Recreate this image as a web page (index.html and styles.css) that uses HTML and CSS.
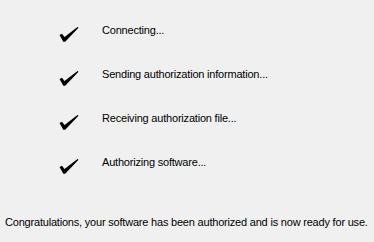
FILE: index.html
```html
<!DOCTYPE html>
<html>
<head>
<meta charset="utf-8">
<link rel="stylesheet" href="styles.css">
</head>
<body>
<div class="panel">
  <ul class="steps">
    <li class="step"><svg class="check" viewBox="0 0 20 15" width="20" height="15"><path d="M0.5 8 L3 6.8 L5.5 10 L18.5 0 L19.5 0.8 L6.2 14.8 L4.3 14.8 Z"/></svg><span class="label">Connecting...</span></li>
    <li class="step"><svg class="check" viewBox="0 0 20 15" width="20" height="15"><path d="M0.5 8 L3 6.8 L5.5 10 L18.5 0 L19.5 0.8 L6.2 14.8 L4.3 14.8 Z"/></svg><span class="label">Sending authorization information...</span></li>
    <li class="step"><svg class="check" viewBox="0 0 20 15" width="20" height="15"><path d="M0.5 8 L3 6.8 L5.5 10 L18.5 0 L19.5 0.8 L6.2 14.8 L4.3 14.8 Z"/></svg><span class="label">Receiving authorization file...</span></li>
    <li class="step"><svg class="check" viewBox="0 0 20 15" width="20" height="15"><path d="M0.5 8 L3 6.8 L5.5 10 L18.5 0 L19.5 0.8 L6.2 14.8 L4.3 14.8 Z"/></svg><span class="label">Authorizing software...</span></li>
  </ul>
  <p class="message">Congratulations, your software has been authorized and is now ready for use.</p>
</div>
</body>
</html>
```
FILE: styles.css
```css
html, body {
  margin: 0;
  padding: 0;
  background: #f0f0f0;
}
.panel {
  width: 374px;
  height: 242px;
  font-family: "Liberation Sans", Arial, sans-serif;
  font-size: 11px;
  line-height: 13px;
  color: #000;
  padding-top: 24px;
  box-sizing: border-box;
}
.steps {
  list-style: none;
  margin: 0;
  padding: 0;
  display: flex;
  flex-direction: column;
  gap: 31px;
  letter-spacing: -0.2px;
}
.step {
  display: flex;
  align-items: flex-start;
  height: 13px;
}
.check {
  margin-left: 59px;
  margin-top: 3px;
  width: 20px;
  height: 15px;
  fill: #000;
  flex: none;
}
.label {
  margin-left: 23px;
}
.message {
  margin: 47px 0 0 5px;
  white-space: nowrap;
  letter-spacing: -0.2px;
}
```
